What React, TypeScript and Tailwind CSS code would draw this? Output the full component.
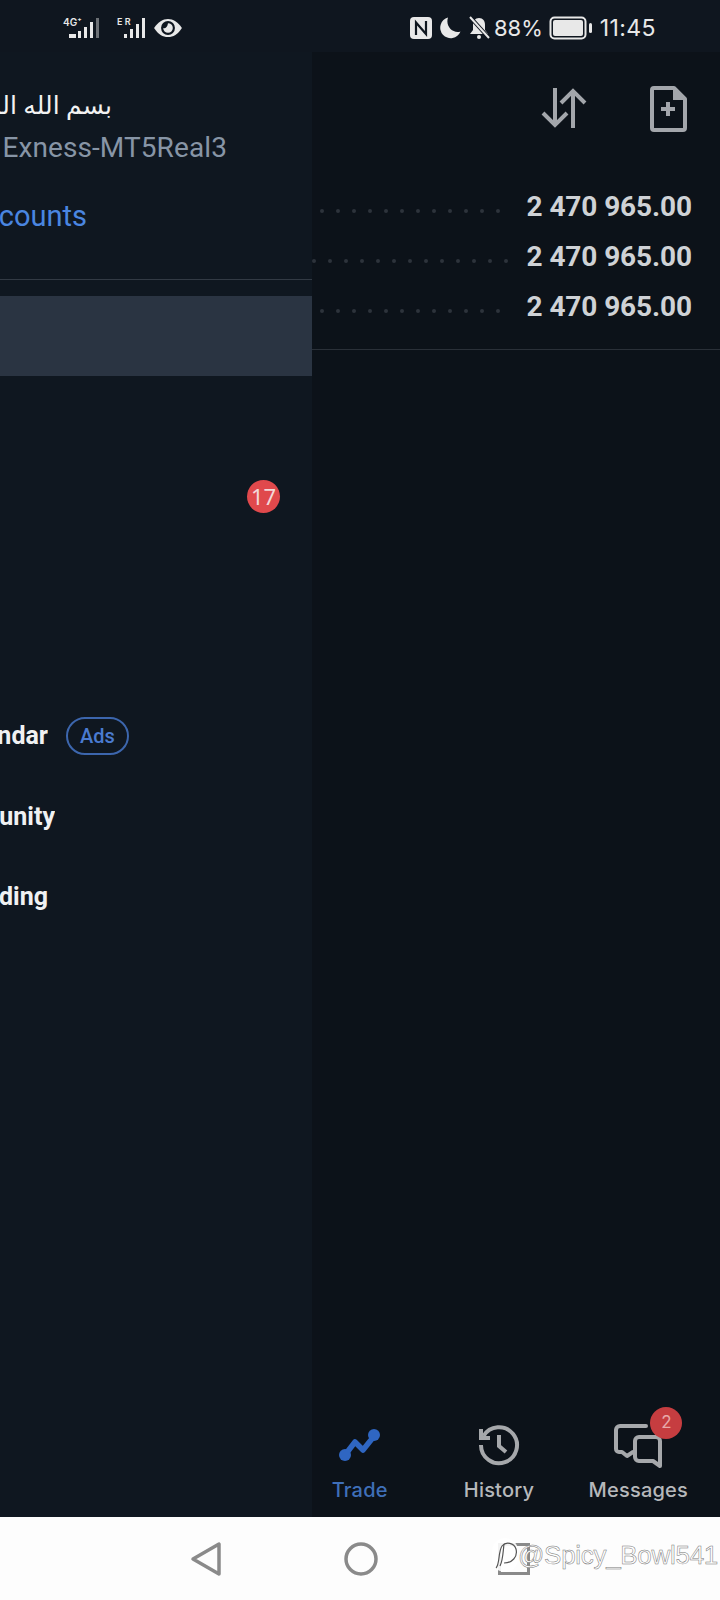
import React from 'react';

const SANS = "font-['Inter','Noto_Sans',sans-serif]";
const ROBOTO = "font-['Roboto','Liberation_Sans',sans-serif]";

const MENU_ROWS = 8;

function Dots({ count }: { count: number }) {
  return (
    <div className="flex flex-1 justify-center gap-[12px] pt-[8px]">
      {Array.from({ length: count }).map((_, i) => (
        <span key={i} className="h-[4px] w-[4px] rounded-full bg-[#2d333b]" />
      ))}
    </div>
  );
}

function PriceRow({ dots }: { dots: number }) {
  return (
    <div className="flex h-[50px] items-center">
      <Dots count={dots} />
      <span className={`ml-[18px] mr-[28px] text-[28px] font-bold tracking-[-0.1px] text-[#cfd2d6] ${ROBOTO}`}>
        2 470 965.00
      </span>
    </div>
  );
}

function StatusBar() {
  return (
    <div className={`flex h-[52px] shrink-0 items-center bg-[#0f161f] pt-[4px] text-[#e8e8e8] ${SANS}`}>
      {/* signal */}
      <div className="ml-[63px] flex items-center gap-[14px]">
        <div className="relative h-[24px] w-[40px]">
          <span className="absolute left-0 top-0 text-[10px] font-semibold leading-[12px]">4G⁺</span>
          <svg viewBox="0 0 40 24" className="h-[24px] w-[40px]" fill="currentColor">
            <rect x="6" y="18" width="7" height="4" />
            <rect x="15" y="15" width="3" height="7" />
            <rect x="21" y="11" width="3" height="11" />
            <rect x="27" y="6" width="3" height="16" />
            <rect x="33" y="2" width="3" height="20" fill="#6c7075" />
          </svg>
        </div>
        <div className="relative h-[24px] w-[30px]">
          <span className="absolute left-0 top-0 text-[9px] font-semibold leading-[12px]">E R</span>
          <svg viewBox="0 0 30 24" className="h-[24px] w-[30px]" fill="currentColor">
            <rect x="7" y="18" width="3" height="4" />
            <rect x="13" y="13" width="3" height="9" />
            <rect x="19" y="8" width="3" height="14" />
            <rect x="25" y="2" width="3" height="20" />
          </svg>
        </div>
        <svg viewBox="0 0 28 20" className="-ml-[8px] h-[22px] w-[30px]" fill="none">
          <path d="M1 10C5 4 9 1.500 14 1.500S23 4 27 10C23 16 19 18.500 14 18.500S5 16 1 10Z" fill="#e8e8e8" />
          <circle cx="14" cy="10" r="6.500" fill="#0f161f" />
          <path d="M14 5.500a4.500 4.500 0 1 1-4.500 4.500c1.500 1 4-.5 4.500-4.500Z" fill="#e8e8e8" />
        </svg>
      </div>

      <div className="ml-auto flex items-center">
        {/* nfc */}
        <svg viewBox="0 0 22 22" className="h-[22px] w-[22px]" fill="none">
          <rect x="0" y="0" width="22" height="22" rx="4" fill="#e8e8e8" />
          <path d="M6 18V5.500L16 17V4" stroke="#0f161f" strokeWidth="2.200" />
        </svg>
        {/* moon */}
        <svg viewBox="0 0 22 22" className="ml-[7px] h-[22px] w-[22px]" fill="#e8e8e8">
          <path d="M9 0.500A10.500 10.500 0 1 0 21.500 14.500C14.500 17 6 10 9 0.500Z" />
        </svg>
        {/* muted bell */}
        <svg viewBox="0 0 24 24" className="ml-[6px] h-[24px] w-[24px]" fill="none">
          <path d="M12 2c4 0 6 3 6 7v5l3 4H3l3-4V9c0-4 2-7 6-7Z" fill="#e8e8e8" />
          <circle cx="12" cy="21" r="2" fill="#e8e8e8" />
          <path d="M3 1 22 22" stroke="#0f161f" strokeWidth="4" />
          <path d="M3 1 22 22" stroke="#e8e8e8" strokeWidth="2" />
        </svg>
        <span className="ml-[3px] text-[22px] leading-none">88%</span>
        {/* battery */}
        <svg viewBox="0 0 44 24" className="ml-[6px] h-[24px] w-[44px]" fill="none">
          <rect x="1.500" y="1.500" width="35" height="21" rx="4" stroke="#e8e8e8" strokeWidth="2" />
          <rect x="4" y="4" width="30" height="16" rx="2" fill="#e8e8e8" />
          <rect x="40" y="7" width="3" height="10" rx="1.500" fill="#e8e8e8" />
        </svg>
        <span className="ml-[7px] mr-[64px] text-[23px] leading-none tracking-[0.4px]">11:45</span>
      </div>
    </div>
  );
}

function MenuRow({ index }: { index: number }) {
  if (index === 0) {
    return <div className="h-20 bg-[#2a3442]" />;
  }
  if (index === 2) {
    return (
      <div className="flex h-20 items-center justify-end pr-[32px]">
        <span className="flex h-[33px] w-[33px] items-center justify-center rounded-full bg-[#e0494c] text-[22px] leading-none text-[#f3d9d9]">
          17
        </span>
      </div>
    );
  }
  if (index === 5) {
    return (
      <div className="flex h-20 items-center">
        <div className="flex w-[48px] justify-end overflow-hidden">
          <span className={`whitespace-nowrap text-[25px] font-bold text-[#f0f1f2] ${ROBOTO}`}>Economic calendar</span>
        </div>
        <span className={`ml-[18px] flex h-[38px] w-[63px] items-center justify-center rounded-full border-2 border-[#3c66ad] text-[20px] font-medium text-[#4a7bd0] ${ROBOTO}`}>
          Ads
        </span>
      </div>
    );
  }
  if (index === 6) {
    return (
      <div className="flex h-20 items-center pt-[2px]">
        <div className="flex w-[55px] justify-end overflow-hidden">
          <span className={`whitespace-nowrap text-[25px] font-bold text-[#f0f1f2] ${ROBOTO}`}>Traders Community</span>
        </div>
      </div>
    );
  }
  if (index === 7) {
    return (
      <div className="flex h-20 items-center pt-[2px]">
        <div className="flex w-[48px] justify-end overflow-hidden">
          <span className={`whitespace-nowrap text-[25px] font-bold text-[#f0f1f2] ${ROBOTO}`}>Algo Trading</span>
        </div>
      </div>
    );
  }
  return <div className="h-20" />;
}

function Drawer() {
  return (
    <aside className="flex w-[312px] shrink-0 flex-col bg-[#0f1720]">
      <div className="h-[228px] shrink-0 border-b border-[#323a44]">
        <div className="mt-[35px] w-[112px] overflow-hidden" dir="rtl">
          <span className="whitespace-nowrap font-['Noto_Sans','DejaVu_Sans',sans-serif] text-[25px] leading-[34px] text-[#f2f2f2]">
            بسم الله الرحمن الرحيم
          </span>
        </div>
        <div className="mt-[10px] flex w-[227px] justify-end overflow-hidden">
          <span className={`whitespace-nowrap text-[28px] leading-[34px] tracking-[0.1px] text-[#8795a6] ${ROBOTO}`}>Exness-MT5Real3</span>
        </div>
        <div className="mt-[34px] flex w-[87px] justify-end overflow-hidden">
          <span className={`whitespace-nowrap text-[29px] leading-[34px] text-[#4a86e0] ${ROBOTO}`}>Manage accounts</span>
        </div>
      </div>
      <div className="mt-[16px] flex flex-col">
        {Array.from({ length: MENU_ROWS }).map((_, i) => (
          <MenuRow key={i} index={i} />
        ))}
      </div>
    </aside>
  );
}

function TabBar() {
  return (
    <nav className={`-ml-[22px] mr-3 mt-auto grid h-[94px] grid-cols-3 ${SANS}`}>
      <div className="flex flex-col items-center">
        <svg viewBox="0 0 42 36" className="mt-[2px] h-[36px] w-[42px]" fill="none">
          <path d="M6 30 16 17l8 8L36 10" stroke="#2f66c2" strokeWidth="5.500" strokeLinejoin="round" />
          <circle cx="6" cy="30" r="6" fill="#2f66c2" />
          <circle cx="35" cy="10" r="6" fill="#2f66c2" />
        </svg>
        <span className="mt-[15px] text-[20px] font-medium leading-[28px] tracking-[0.2px] text-[#3f6fb8]">Trade</span>
      </div>
      <div className="flex flex-col items-center">
        <svg viewBox="0 0 44 44" className="h-[44px] w-[44px]" fill="none" stroke="#a6a8ab" strokeWidth="4">
          <path d="M6.500 13A18 18 0 1 1 4 22" />
          <path d="M4 6v9h9" />
          <path d="M22 12v11l7 6" />
        </svg>
        <span className="mt-[9px] text-[20px] font-medium leading-[28px] tracking-[0.2px] text-[#b6b8bb]">History</span>
      </div>
      <div className="flex flex-col items-center">
        <div className="relative h-[46px] w-[50px]">
          <svg viewBox="0 0 50 46" className="h-[46px] w-[50px]" fill="none" stroke="#a6a8ab" strokeWidth="4" strokeLinejoin="round" strokeLinecap="round">
            <path d="M33 3H7a4 4 0 0 0-4 4v19a3 3 0 0 0 3 3h3l5 4 6-4" />
            <path d="M26 14h17a4 4 0 0 1 4 4v25l-7-5H26a4 4 0 0 1-4-4V18a4 4 0 0 1 4-4Z" />
          </svg>
          <span className="absolute -right-[19px] -top-[16px] flex h-[32px] w-[32px] items-center justify-center rounded-full bg-[#c63d40] text-[17px] text-[#e8a9a9]">
            2
          </span>
        </div>
        <span className="mt-[7px] whitespace-nowrap text-[20px] font-medium leading-[28px] tracking-[0.2px] text-[#b6b8bb]">Messages</span>
      </div>
    </nav>
  );
}

function SystemNav() {
  return (
    <div className="relative flex h-[83px] shrink-0 items-center bg-[#fdfdfd] pl-[190px]">
      <svg viewBox="0 0 32 36" className="h-[36px] w-[32px]" fill="none" stroke="#8a8a8a" strokeWidth="3.500" strokeLinejoin="round">
        <path d="M29 3v30L3 18Z" />
      </svg>
      <svg viewBox="0 0 34 34" className="ml-[122px] h-[34px] w-[34px]" fill="none" stroke="#8a8a8a" strokeWidth="3.500">
        <circle cx="17" cy="17" r="15" />
      </svg>
      <div className="ml-[120px] h-[32px] w-[32px] border-[3px] border-[#8a8a8a]" />
      {/* watermark */}
      <div className="absolute left-[492px] top-[21px] flex items-center">
        <svg viewBox="0 0 26 34" className="h-[34px] w-[26px] rounded-full bg-white/90" fill="none" stroke="#555" strokeWidth="1.200">
          <path d="M4 30C8 26 6 14 10 8c4-5 12-3 14 3 2 8-4 14-12 14" />
          <path d="M12 6c-1 8-1 16-4 22" />
        </svg>
        <span className="font-['Liberation_Sans',sans-serif] text-[26px] leading-none tracking-[-0.3px] text-white [-webkit-text-stroke:0.5px_#777]">
          @Spicy_Bowl541
        </span>
      </div>
    </div>
  );
}

export default function App() {
  return (
    <div className="flex h-[1600px] w-[720px] flex-col overflow-hidden bg-[#0c1219]">
      <StatusBar />
      <div className="flex min-h-0 flex-1">
        <Drawer />
        <div className="flex min-w-0 flex-1 flex-col">
          <div className="flex h-[130px] shrink-0 justify-end gap-[62px] pr-[33px] pt-[34px]">
            <svg viewBox="0 0 46 40" className="mt-[2px] h-[40px] w-[46px]" fill="none" stroke="#a3a6ab" strokeWidth="4">
              <path d="M14 0v37M2 25l12 12 12-12" />
              <path d="M32 40V3M20 15 32 3l12 12" />
            </svg>
            <svg viewBox="0 0 38 46" className="h-[46px] w-[38px]" fill="none">
              <path d="M5 2h20l11 11v29a2 2 0 0 1-2 2H5a2 2 0 0 1-2-2V4a2 2 0 0 1 2-2Z" stroke="#a3a6ab" strokeWidth="4" strokeLinejoin="round" />
              <path d="M24 1 37 14H24Z" fill="#a3a6ab" />
              <path d="M19 16v14M12 23h14" stroke="#a3a6ab" strokeWidth="4" />
            </svg>
          </div>
          <div className="border-b border-[#2a3038] pb-[17px]">
            <PriceRow dots={12} />
            <PriceRow dots={13} />
            <PriceRow dots={12} />
          </div>
          <TabBar />
        </div>
      </div>
      <SystemNav />
    </div>
  );
}
